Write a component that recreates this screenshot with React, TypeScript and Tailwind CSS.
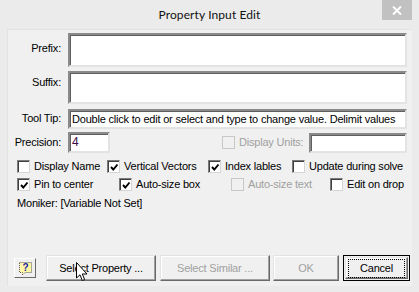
import { type ReactNode } from "react";

const font = "font-['Liberation_Sans',Arial,sans-serif] text-[11px] leading-[13px] tracking-[-0.2px]";

function Box({ className, children }: { className: string; children?: ReactNode }) {
  return (
    <div
      className={`bg-white border-[2px] border-t-[#8a8a8a] border-l-[#8a8a8a] border-r-[#e3e3e3] border-b-[#e3e3e3] shadow-[inset_1px_1px_0_#5f5f5f] ${className}`}
    >
      {children}
    </div>
  );
}

function Check({ checked, disabled }: { checked?: boolean; disabled?: boolean }) {
  return (
    <span
      className={`w-[13px] h-[13px] shrink-0 border-[1px] flex items-center justify-center ${
        disabled
          ? "bg-[#f0f0f0] border-[#c8c8c8]"
          : "bg-white border-t-[#7a7a7a] border-l-[#7a7a7a] border-r-[#d5d5d5] border-b-[#d5d5d5] shadow-[inset_1px_1px_0_#404040]"
      }`}
    >
      {checked && (
        <svg width="9" height="9" viewBox="0 0 9 9" className="ml-[1px] mt-[1px]">
          <path d="M1 4 L3.3 6.5 L7.5 1.5" fill="none" stroke="#000" strokeWidth="1.9" />
        </svg>
      )}
    </span>
  );
}

function Opt({ label, checked, disabled, className = "" }: { label: string; checked?: boolean; disabled?: boolean; className?: string }) {
  return (
    <div className={`flex items-center gap-[4px] ${className}`}>
      <Check checked={checked} disabled={disabled} />
      <span className={disabled ? "text-[#a0a0a0]" : "text-black"}>{label}</span>
    </div>
  );
}

function Btn({ children, className, disabled, focused }: { children: ReactNode; className: string; disabled?: boolean; focused?: boolean }) {
  return (
    <div
      className={`h-[26px] flex items-center justify-center ${
        focused ? "border-[1px] border-black p-[1px]" : ""
      } ${className}`}
    >
      <div
        className={`w-full h-full flex items-center justify-center bg-[#f0f0f0] border-[1px] border-t-[#e3e3e3] border-l-[#e3e3e3] border-r-[#696969] border-b-[#696969] shadow-[inset_-1px_-1px_0_#a0a0a0,inset_1px_1px_0_#fff] ${
          disabled ? "text-[#a0a0a0]" : "text-black"
        }`}
      >
        {focused ? (
          <span className="border border-dotted border-black py-[2px] w-[57px] text-center">{children}</span>
        ) : (
          children
        )}
      </div>
    </div>
  );
}

export default function App() {
  return (
    <div className={`w-[419px] h-[292px] bg-[#ebebeb] flex flex-col relative ${font}`}>
      {/* TITLE BAR */}
      <div className="h-[29px] relative flex items-center justify-center">
        <span className="font-['Lato',sans-serif] text-[12px] tracking-[0.1px] text-[#111] -mt-[1px]">Property Input Edit</span>
        <div className="absolute top-0 right-[7px] w-[30px] h-[20px] bg-[#c1c1c1] flex items-center justify-center">
          <svg width="10" height="9" viewBox="0 0 10 9">
            <path d="M1 0.5 L9 8.5 M9 0.5 L1 8.5" stroke="#fff" strokeWidth="2" />
          </svg>
        </div>
      </div>

      {/* PANEL */}
      <div className="mx-[7px] mb-[6px] flex-1 bg-[#f0f0f0] border-l border-t border-[#e2e2e2] flex flex-col pt-[3px]">
        <div className="flex">
          <span className="w-[53px] text-right pt-[9px]">Prefix:</span>
          <Box className="ml-[7px] w-[339px] h-[34px]" />
        </div>
        <div className="flex mt-[4px]">
          <span className="w-[53px] text-right pt-[5px]">Suffix:</span>
          <Box className="ml-[7px] w-[339px] h-[33px]" />
        </div>
        <div className="flex mt-[5px]">
          <span className="w-[53px] text-right pt-[3px]">Tool Tip:</span>
          <Box className="ml-[7px] w-[339px] h-[20px] pl-[2px] pt-[2px] overflow-hidden whitespace-nowrap">
            Double click to edit or select and type to change value. Delimit values
          </Box>
        </div>
        <div className="flex mt-[3px] items-center h-[21px]">
          <span className="w-[53px] text-right">Precision:</span>
          <Box className="ml-[7px] w-[42px] h-[21px] pl-[2px] pt-[2px] text-[#3d0a45] text-[12px]">4</Box>
          <Opt label="Display Units:" disabled className="ml-[112px]" />
          <Box className="ml-[6px] w-[98px] h-[20px]" />
        </div>
        <div className="flex items-center mt-[7px] ml-[9px] h-[13px]">
          <Opt label="Display Name" className="w-[90px]" />
          <Opt label="Vertical Vectors" checked className="w-[101px]" />
          <Opt label="Index lables" checked className="w-[84px]" />
          <Opt label="Update during solve" />
        </div>
        <div className="flex items-center mt-[5px] ml-[9px] h-[13px]">
          <Opt label="Pin to center" checked className="w-[102px]" />
          <Opt label="Auto-size box" checked className="w-[112px]" />
          <Opt label="Auto-size text" disabled className="w-[99px]" />
          <Opt label="Edit on drop" />
        </div>
        <div className="mt-[6px] ml-[9px]">Moniker: [Variable Not Set]</div>

        {/* BUTTONS */}
        <div className="mt-auto mb-[5px] flex items-center">
          <div className="ml-[6px] w-[22px] h-[20px] bg-[#f0f0f0] border-[1px] border-t-[#fff] border-l-[#fff] border-r-[#696969] border-b-[#696969] flex items-center justify-center">
            <svg width="15" height="15" viewBox="0 0 15 15">
              <path d="M1.5 1.5 H13.5 V11.5 H7 L4.5 14 V11.5 H1.5 Z" fill="#fff7a6" stroke="#5a5a5a" strokeWidth="1" strokeDasharray="1 1" />
              <text x="7.5" y="10" textAnchor="middle" fontSize="10" fontWeight="bold" fill="#1c1caa" fontFamily="Liberation Sans, Arial, sans-serif">?</text>
            </svg>
          </div>
          <Btn className="ml-[10px] w-[110px]">Select Property ...</Btn>
          <Btn className="ml-[4px] w-[110px]" disabled>Select Similar ...</Btn>
          <Btn className="ml-[3px] w-[66px]" disabled>OK</Btn>
          <Btn className="ml-[4px] w-[67px]" focused>Cancel</Btn>
        </div>
      </div>

      {/* CURSOR */}
      <svg className="absolute left-[76px] top-[262px]" width="13" height="20" viewBox="0 0 13 20">
        <path d="M0.5 0.5 L0.5 16 L4 12.8 L6.3 18.5 L8.6 17.5 L6.3 12 L11 12 Z" fill="#fff" stroke="#000" strokeWidth="1" strokeLinejoin="miter" />
      </svg>
    </div>
  );
}
